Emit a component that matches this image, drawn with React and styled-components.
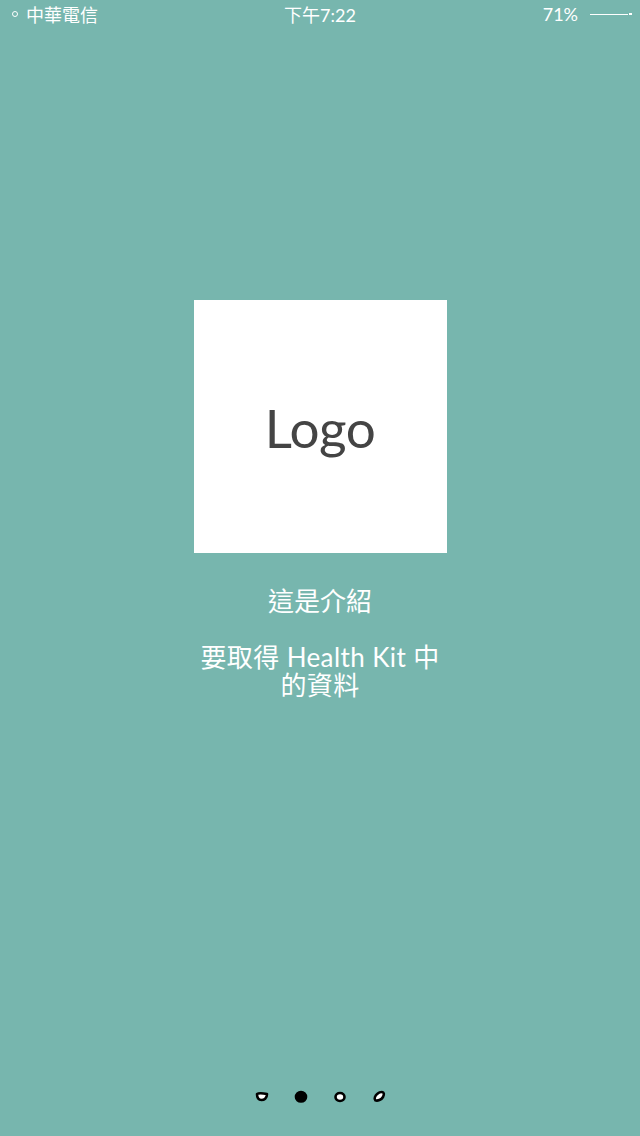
import React from "react";
import styled, { createGlobalStyle } from "styled-components";

const Global = createGlobalStyle`
  html, body { margin: 0; padding: 0; background: #77b6ae; }
  body { font-family: "Lato", "Noto Sans CJK TC", sans-serif; }
`;

const Page = styled.div`
  width: 640px;
  min-height: 1136px;
  background: #77b6ae;
  display: flex;
  flex-direction: column;
  color: #fff;
`;

const StatusBar = styled.div`
  height: 28px;
  display: grid;
  grid-template-columns: 1fr auto 1fr;
  align-items: center;
  padding: 0 8px 0 12px;
  font-family: "Lato", "Noto Sans CJK TC", sans-serif;
  font-size: 18px;
  color: #fff;
`;

const Carrier = styled.div`
  display: flex;
  align-items: center;
  gap: 8px;
`;

const Ring = styled.span`
  width: 4px;
  height: 4px;
  border: 1px solid #fff;
  border-radius: 50%;
`;

const Clock = styled.div`
  text-align: center;
  margin-left: -4px;
`;

const Battery = styled.div`
  display: flex;
  justify-content: flex-end;
  align-items: center;
  gap: 12px;
`;

const BatteryLine = styled.span`
  display: flex;
  align-items: center;
  &::before {
    content: "";
    width: 38px;
    height: 1px;
    background: #fff;
  }
  &::after {
    content: "";
    width: 3px;
    height: 2px;
    margin-left: 1px;
    background: #fff;
  }
`;

const Content = styled.main`
  display: flex;
  flex-direction: column;
  align-items: center;
  margin-top: 272px;
`;

const LogoBox = styled.div`
  width: 253px;
  height: 253px;
  background: #fff;
  display: flex;
  justify-content: center;
  padding-top: 92px;
  box-sizing: border-box;
`;

const LogoText = styled.span`
  font-family: "Lato", sans-serif;
  font-size: 53px;
  line-height: 72px;
  color: #444;
  letter-spacing: -0.5px;
`;

const Intro = styled.p`
  margin: 34px 0 0;
  width: 253px;
  text-align: center;
  font-size: 26px;
  line-height: 28px;
  font-family: "Lato", "Noto Sans CJK TC", sans-serif;
`;

const Detail = styled(Intro)`
  margin-top: 28px;
  letter-spacing: 0.4px;
`;

const Footer = styled.footer`
  margin-top: auto;
  padding-bottom: 33px;
  display: flex;
  justify-content: center;
  gap: 25px;
`;

const Dot = ({ d, fill }) => (
  <svg width="14" height="13" viewBox="0 0 14 13">
    <path d={d} fill={fill} stroke="#000" strokeWidth="2.6" strokeLinejoin="round" />
  </svg>
);

const dots = [
  { d: "M2 4 C3.5 3 7 3 12 4 C12 8.5 9 10 6.5 10 C3.5 10 2 8 2 4 Z", fill: "#fff" },
  { d: "M7 2 C9.8 2 12 4.2 12 7 C12 9.8 9.8 11.5 7 11.5 C4.2 11.5 2 9.8 2 7 C2 4.2 4.2 2 7 2 Z", fill: "#000" },
  { d: "M7 3 C9.6 3 11.5 4.7 11.5 7 C11.5 9.3 9.6 11 7 11 C4.4 11 2.5 9.3 2.5 7 C2.5 4.7 4.4 3 7 3 Z", fill: "#fff" },
  { d: "M10 2 C12 2 12.5 4.3 11 7 C9.5 9.8 5.5 11.3 3.3 10.3 C1.7 8.8 3.2 5.5 5.4 3.8 C6.6 2.7 8.3 2 10 2 Z", fill: "#fff" },
];

export default function App() {
  return (
    <>
      <Global />
      <Page>
        <StatusBar>
          <Carrier>
            <Ring />
            <span>中華電信</span>
          </Carrier>
          <Clock>下午7:22</Clock>
          <Battery>
            <span>71%</span>
            <BatteryLine />
          </Battery>
        </StatusBar>
        <Content>
          <LogoBox>
            <LogoText>Logo</LogoText>
          </LogoBox>
          <Intro>這是介紹</Intro>
          <Detail>要取得 Health Kit 中的資料</Detail>
        </Content>
        <Footer>
          {dots.map((p, i) => (
            <Dot key={i} d={p.d} fill={p.fill} />
          ))}
        </Footer>
      </Page>
    </>
  );
}
